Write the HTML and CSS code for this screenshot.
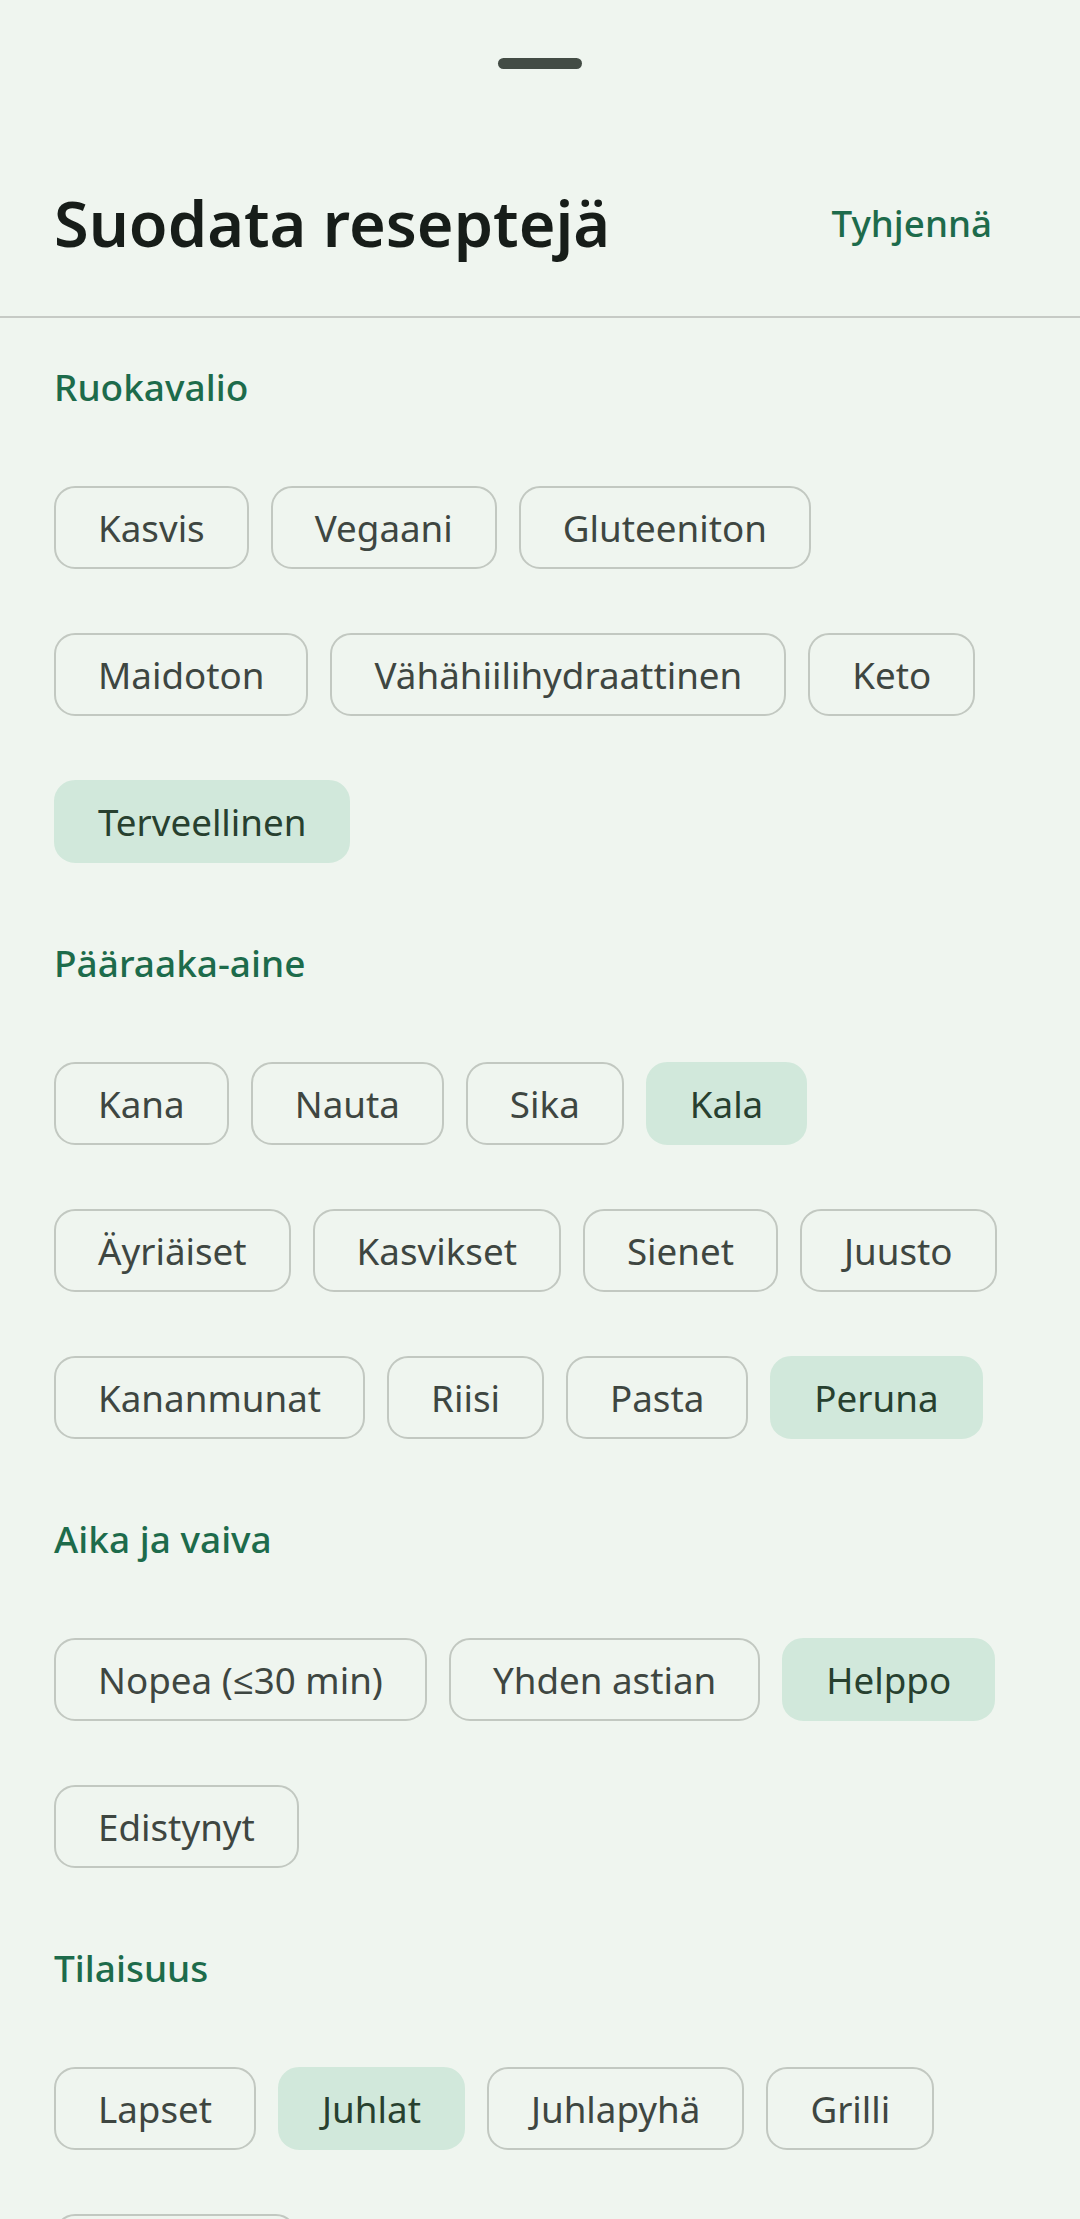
FILE: index.html
```html
<!DOCTYPE html>
<html lang="fi">
<head>
    <meta charset="UTF-8">
    <meta name="viewport" content="width=device-width, initial-scale=1.0">
    <title>Suodata reseptejä</title>
    <link rel="stylesheet" href="styles.css">
</head>
<body>

    <div class="sheet">
        <!-- Drag handle -->
        <div class="handle"></div>

        <div class="sheet-header">
            <h1 class="sheet-title">Suodata reseptejä</h1>
            <button class="clear-button">Tyhjennä</button>
        </div>

        <div class="divider"></div>

        <div class="filters">
            <section class="filter-group">
                <h2 class="group-title">Ruokavalio</h2>
                <div class="chips">
                    <span class="chip">Kasvis</span>
                    <span class="chip">Vegaani</span>
                    <span class="chip">Gluteeniton</span>
                    <span class="chip">Maidoton</span>
                    <span class="chip">Vähähiilihydraattinen</span>
                    <span class="chip">Keto</span>
                    <span class="chip selected">Terveellinen</span>
                </div>
            </section>

            <section class="filter-group">
                <h2 class="group-title">Pääraaka-aine</h2>
                <div class="chips">
                    <span class="chip">Kana</span>
                    <span class="chip">Nauta</span>
                    <span class="chip">Sika</span>
                    <span class="chip selected">Kala</span>
                    <span class="chip">Äyriäiset</span>
                    <span class="chip">Kasvikset</span>
                    <span class="chip">Sienet</span>
                    <span class="chip">Juusto</span>
                    <span class="chip">Kananmunat</span>
                    <span class="chip">Riisi</span>
                    <span class="chip">Pasta</span>
                    <span class="chip selected">Peruna</span>
                </div>
            </section>

            <section class="filter-group">
                <h2 class="group-title">Aika ja vaiva</h2>
                <div class="chips">
                    <span class="chip">Nopea (≤30 min)</span>
                    <span class="chip">Yhden astian</span>
                    <span class="chip selected">Helppo</span>
                    <span class="chip">Edistynyt</span>
                </div>
            </section>

            <section class="filter-group">
                <h2 class="group-title">Tilaisuus</h2>
                <div class="chips">
                    <span class="chip">Lapset</span>
                    <span class="chip selected">Juhlat</span>
                    <span class="chip">Juhlapyhä</span>
                    <span class="chip">Grilli</span>
                    <span class="chip">Eväsretki</span>
                </div>
            </section>
        </div>
    </div>

</body>
</html>
```

FILE: styles.css
```css
body {
    margin: 0;
    background-color: #eff5ef;
    font-family: 'Noto Sans', 'Open Sans', sans-serif;
    color: #171d19;
}
.sheet {
    display: flex;
    flex-direction: column;
}
.handle {
    width: 84px;
    height: 11px;
    border-radius: 6px;
    background-color: #434c45;
    margin: 58px auto 0;
}
.sheet-header {
    display: flex;
    justify-content: space-between;
    align-items: center;
    padding: 114px 54px 53px 54px;
}
.sheet-title {
    margin: 0;
    font-size: 63px;
    line-height: 80px;
    font-weight: 600;
    color: #171d19;
}
.clear-button {
    background: none;
    border: none;
    padding: 0 34px;
    font-family: inherit;
    font-size: 36.75px;
    line-height: 50px;
    font-weight: 500;
    color: #1d6b4b;
    cursor: pointer;
}
.divider {
    height: 2px;
    background-color: #c6cac5;
}
.filters {
    padding: 44px 54px 0;
}
.filter-group + .filter-group {
    margin-top: 75px;
}
.group-title {
    margin: 0;
    font-size: 37px;
    line-height: 50px;
    font-weight: 500;
    color: #1d6b4b;
}
.chips {
    display: flex;
    flex-wrap: wrap;
    column-gap: 22px;
    row-gap: 64px;
    margin-top: 74px;
}
.chip {
    box-sizing: border-box;
    height: 83px;
    display: flex;
    align-items: center;
    padding: 0 42px;
    border: 2px solid #c2c8c1;
    border-radius: 21px;
    font-size: 36.75px;
    font-weight: 400;
    color: #3e4641;
    white-space: nowrap;
    cursor: pointer;
}
.chip.selected {
    background-color: #d1e8db;
    border-color: #d1e8db;
    color: #27402f;
}
```
